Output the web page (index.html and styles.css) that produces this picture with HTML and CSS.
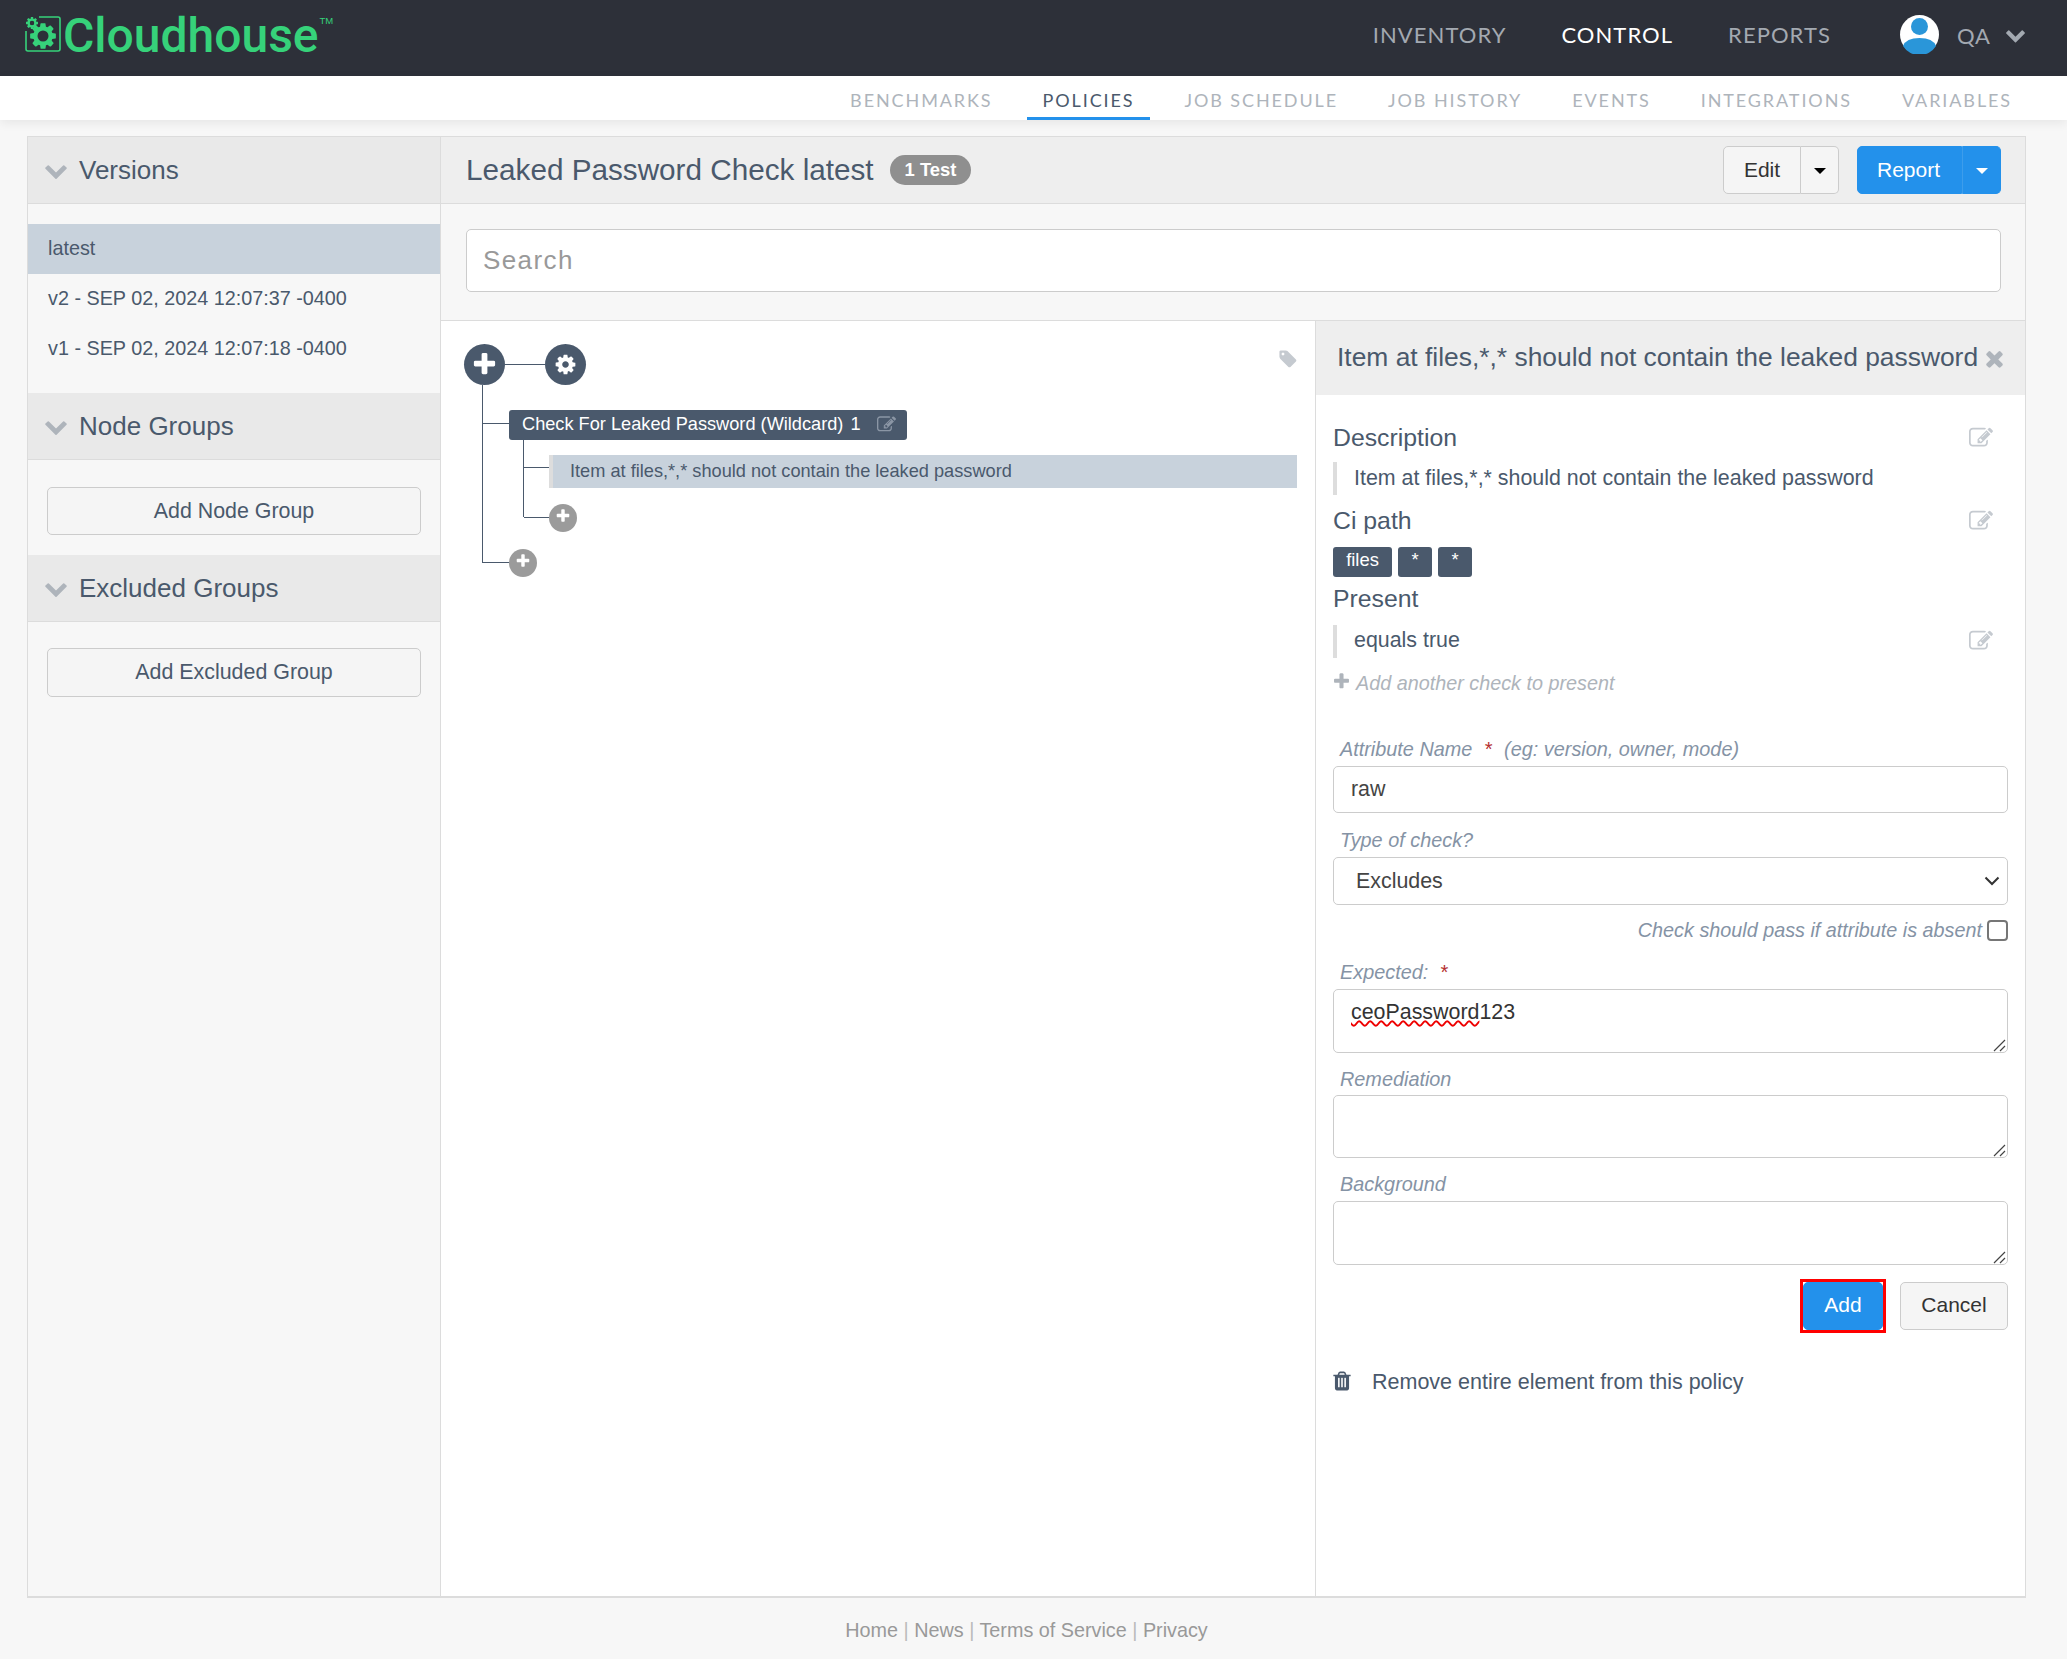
FILE: index.html
```html
<!DOCTYPE html>
<html lang="en">

<head>
 <meta charset="UTF-8">
 <meta name="viewport" content="width=device-width, initial-scale=1.0">
 <link rel="stylesheet" href="styles.css">
 <title>Leaked Password Check - Cloudhouse</title>
</head>

<body>
 <!-- icon set used all over the page -->
 <svg class="icon-defs" aria-hidden="true">
  <symbol id="i-chevron" viewBox="0 0 1792 1792"><path d="M1683 808l-742 741q-19 19-45 19t-45-19l-742-741q-19-19-19-45.5t19-45.5l166-165q19-19 45-19t45 19l531 531 531-531q19-19 45-19t45 19l166 165q19 19 19 45.5t-19 45.5z"/></symbol>
  <symbol id="i-plus" viewBox="0 0 1792 1792"><path d="M1600 736v192q0 40-28 68t-68 28h-416v416q0 40-28 68t-68 28h-192q-40 0-68-28t-28-68v-416h-416q-40 0-68-28t-28-68v-192q0-40 28-68t68-28h416v-416q0-40 28-68t68-28h192q40 0 68 28t28 68v416h416q40 0 68 28t28 68z"/></symbol>
  <symbol id="i-cog" viewBox="0 0 1792 1792"><path d="M1152 896q0-106-75-181t-181-75-181 75-75 181 75 181 181 75 181-75 75-181zm512-109v222q0 12-8 23t-20 13l-185 28q-19 54-39 91 35 50 107 138 10 12 10 25t-9 23q-27 37-99 108t-94 71q-12 0-26-9l-138-108q-44 23-91 38-16 136-29 186-7 28-36 28h-222q-14 0-24.5-8.5t-11.5-21.5l-28-184q-49-16-90-37l-141 107q-10 9-25 9-14 0-25-11-126-114-165-168-7-10-7-23 0-12 8-23 15-21 51-66.5t54-70.5q-27-50-41-99l-183-27q-13-2-21-12.5t-8-23.5v-222q0-12 8-23t19-13l186-28q14-46 39-92-40-57-107-138-10-12-10-24 0-10 9-23 26-36 98.5-107.5t94.5-71.5q13 0 26 10l138 107q44-23 91-38 16-136 29-186 7-28 36-28h222q14 0 24.5 8.5t11.5 21.5l28 184q49 16 90 37l142-107q9-9 24-9 13 0 25 10 129 119 165 170 7 8 7 22 0 12-8 23-15 21-51 66.5t-54 70.5q26 50 41 98l183 28q13 2 21 12.5t8 23.5z"/></symbol>
  <symbol id="i-times" viewBox="0 0 1792 1792"><path d="M1490 1322q0 40-28 68l-136 136q-28 28-68 28t-68-28l-294-294-294 294q-28 28-68 28t-68-28l-136-136q-28-28-28-68t28-68l294-294-294-294q-28-28-28-68t28-68l136-136q28-28 68-28t68 28l294 294 294-294q28-28 68-28t68 28l136 136q28 28 28 68t-28 68l-294 294 294 294q28 28 28 68z"/></symbol>
  <symbol id="i-tag" viewBox="0 0 1792 1792"><path d="M576 448q0-53-37.5-90.5t-90.5-37.5-90.5 37.5-37.5 90.5 37.5 90.5 90.5 37.5 90.5-37.5 37.5-90.5zm1067 576q0 53-37 90l-491 492q-39 37-91 37-53 0-90-37l-715-716q-38-37-64.5-101t-26.5-117v-416q0-52 38-90t90-38h416q53 0 117 26.5t102 64.5l715 714q37 39 37 91z"/></symbol>
  <symbol id="i-trash" viewBox="0 0 1792 1792"><path d="M704 1376v-704q0-14-9-23t-23-9h-64q-14 0-23 9t-9 23v704q0 14 9 23t23 9h64q14 0 23-9t9-23zm256 0v-704q0-14-9-23t-23-9h-64q-14 0-23 9t-9 23v704q0 14 9 23t23 9h64q14 0 23-9t9-23zm256 0v-704q0-14-9-23t-23-9h-64q-14 0-23 9t-9 23v704q0 14 9 23t23 9h64q14 0 23-9t9-23zm-544-992h448l-48-117q-7-9-17-11h-317q-10 2-17 11zm928 32v64q0 14-9 23t-23 9h-96v948q0 83-47 143.5t-113 60.5h-832q-66 0-113-58.5t-47-141.5v-952h-96q-14 0-23-9t-9-23v-64q0-14 9-23t23-9h309l70-167q15-37 54-63t79-26h320q40 0 79 26t54 63l70 167h309q14 0 23 9t9 23z"/></symbol>
  <symbol id="i-edit" viewBox="0 0 1792 1792"><path d="M888 1184l116-116-152-152-116 116v56h96v96h56zm440-720q-16-16-33 1l-350 350q-17 17-1 33t33-1l350-350q17-17 1-33zm80 594v190q0 119-84.5 203.5t-203.5 84.5h-832q-119 0-203.5-84.5t-84.5-203.5v-832q0-119 84.5-203.5t203.5-84.5h832q63 0 117 25 15 7 18 23 3 17-9 29l-49 49q-14 14-32 8-23-6-45-6h-832q-66 0-113 47t-47 113v832q0 66 47 113t113 47h832q66 0 113-47t47-113v-126q0-13 9-22l64-64q15-15 35-7t20 29zm-96-738l288 288-672 672h-288v-288zm444 132l-92 92-288-288 92-92q28-28 68-28t68 28l152 152q28 28 28 68t-28 68z"/></symbol>
 </svg>

 <header class="topbar">
  <a class="logo" href="#">
   <svg class="logo-mark" viewBox="0 0 36 36">
    <path class="logo-box" d="M14 1h19q2 0 2 2v30q0 2-2 2H3q-2 0-2-2V15"/>
    <use href="#i-cog" y="0" width="14" height="14"/>
    <circle class="logo-hole" cx="7" cy="7" r="2.200"/>
    <use href="#i-cog" x="3" y="5" width="30" height="30"/>
    <circle class="logo-hole" cx="18" cy="20" r="5.500"/>
   </svg>
   <span class="logo-text">Cloudhouse</span><span class="logo-tm">TM</span>
  </a>
  <nav class="main-nav">
   <a href="#">Inventory</a>
   <a href="#" class="active">Control</a>
   <a href="#">Reports</a>
  </nav>
  <div class="user-menu">
   <svg class="avatar" viewBox="0 0 39 39">
    <circle cx="19.5" cy="19.5" r="19.5" fill="#fff"/>
    <ellipse cx="19.5" cy="11.5" rx="8.5" ry="8.5" fill="#2a96d9"/>
    <path d="M3 31q3-8 16.500-8T36 31a19.500 19.500 0 0 1-33 0z" fill="#2a96d9"/>
   </svg>
   <span class="user-name">QA</span>
   <svg class="user-caret"><use href="#i-chevron"/></svg>
  </div>
 </header>

 <nav class="sub-nav">
  <a href="#">Benchmarks</a>
  <a href="#" class="active">Policies</a>
  <a href="#">Job Schedule</a>
  <a href="#">Job History</a>
  <a href="#">Events</a>
  <a href="#">Integrations</a>
  <a href="#">Variables</a>
 </nav>

 <main class="frame">
  <aside class="sidebar">
   <h2 class="side-head"><svg class="side-caret"><use href="#i-chevron"/></svg>Versions</h2>
   <ul class="version-list">
    <li class="selected">latest</li>
    <li>v2 - SEP 02, 2024 12:07:37 -0400</li>
    <li>v1 - SEP 02, 2024 12:07:18 -0400</li>
   </ul>
   <h2 class="side-head side-head-gap"><svg class="side-caret"><use href="#i-chevron"/></svg>Node Groups</h2>
   <div class="side-action"><button class="btn btn-wide">Add Node Group</button></div>
   <h2 class="side-head side-head-gap side-head-low"><svg class="side-caret"><use href="#i-chevron"/></svg>Excluded Groups</h2>
   <div class="side-action side-action-last"><button class="btn btn-wide">Add Excluded Group</button></div>
  </aside>

  <section class="policy">
   <div class="policy-head">
    <h1>Leaked Password Check latest</h1>
    <span class="badge">1 Test</span>
    <div class="head-buttons">
     <div class="split">
      <button class="btn split-main">Edit</button>
      <button class="btn split-caret"><i class="caret"></i></button>
     </div>
     <div class="split split-blue">
      <button class="btn split-main">Report</button>
      <button class="btn split-caret"><i class="caret"></i></button>
     </div>
    </div>
   </div>

   <div class="search-bar">
    <input type="text" class="search-input" placeholder="Search">
   </div>

   <div class="workspace">
    <div class="tree">
     <div class="tree-root">
      <span class="node-btn"><svg><use href="#i-plus"/></svg></span>
      <span class="root-link"></span>
      <span class="node-btn"><svg class="small"><use href="#i-cog"/></svg></span>
      <svg class="tree-tag"><use href="#i-tag"/></svg>
     </div>
     <div class="branch">
      <div class="group-title">
       <span>Check For Leaked Password (Wildcard)</span>
       <span>1</span>
       <svg><use href="#i-edit"/></svg>
      </div>
      <div class="branch-inner">
       <div class="tree-item">Item at files,*,* should not contain the leaked password</div>
       <span class="add-btn add-inner"><svg><use href="#i-plus"/></svg></span>
      </div>
      <span class="add-btn add-outer"><svg><use href="#i-plus"/></svg></span>
     </div>
    </div>

    <div class="detail">
     <div class="detail-head">
      <span>Item at files,*,* should not contain the leaked password</span>
      <svg><use href="#i-times"/></svg>
     </div>
     <div class="detail-body">
      <div class="prop-head">Description<svg class="edit-icon"><use href="#i-edit"/></svg></div>
      <div class="prop-value">Item at files,*,* should not contain the leaked password</div>
      <div class="prop-head prop-ci">Ci path<svg class="edit-icon"><use href="#i-edit"/></svg></div>
      <div class="tags">
       <span class="tag">files</span>
       <span class="tag tag-star">*</span>
       <span class="tag tag-star">*</span>
      </div>
      <div class="prop-head prop-present">Present</div>
      <div class="prop-value prop-row">equals true<svg class="edit-icon"><use href="#i-edit"/></svg></div>
      <div class="add-check"><svg><use href="#i-plus"/></svg>Add another check to present</div>

      <form class="check-form">
       <label class="field-label first">Attribute Name <b class="req">*</b> (eg: version, owner, mode)</label>
       <input type="text" class="control" value="raw">

       <label class="field-label">Type of check?</label>
       <select class="control control-select">
        <option>Excludes</option>
       </select>

       <div class="absent-row">
        <span>Check should pass if attribute is absent</span>
        <i class="checkbox"></i>
       </div>

       <label class="field-label expected">Expected: <b class="req">*</b></label>
       <div class="control area area-text"><span class="misspelt">ceoPassword</span>123</div>

       <label class="field-label field-tight">Remediation</label>
       <textarea class="control area"></textarea>

       <label class="field-label field-last">Background</label>
       <textarea class="control area area-last"></textarea>

       <div class="form-buttons">
        <span class="add-mark"><button type="button" class="btn btn-add">Add</button></span>
        <button type="button" class="btn btn-cancel">Cancel</button>
       </div>
      </form>

      <div class="remove-row"><svg><use href="#i-trash"/></svg>Remove entire element from this policy</div>
     </div>
    </div>
   </div>
  </section>
 </main>

 <footer class="page-foot">
  <a href="#">Home</a> | <a href="#">News</a> | <a href="#">Terms of Service</a> | <a href="#">Privacy</a>
 </footer>
</body>

</html>
```

FILE: styles.css
```css
/* Reset */
body,
h1,
h2,
ul {
 margin: 0;
 padding: 0;
}

a {
 text-decoration: none;
 color: inherit;
}

body {
 background-color: #F7F7F7;
 color: #4A596C;
 font-family: "Liberation Sans", Arial, sans-serif;
 font-size: 21.4px;
}

.icon-defs {
 display: none;
}

svg {
 fill: currentColor;
}

/* Top bar */
.topbar {
 display: flex;
 align-items: center;
 height: 76px;
 padding-bottom: 7px;
 box-sizing: border-box;
 background-color: #2D3039;
}

.logo {
 display: flex;
 align-items: flex-start;
 margin-left: 25px;
 color: #36D27A;
}

.logo-mark {
 width: 36px;
 height: 36px;
}

.logo-box {
 fill: none;
 stroke: #36D27A;
 stroke-width: 1.6;
}

.logo-hole {
 fill: #2D3039;
}

.logo-text {
 margin-left: 2px;
 margin-top: 2px;
 font-family: Roboto, sans-serif;
 font-size: 48px;
 font-weight: 500;
 line-height: 36px;
}

.logo-tm {
 margin-left: 1px;
 font-size: 9.5px;
 line-height: 10px;
}

.main-nav {
 display: flex;
 gap: 55px;
 margin-left: auto;
 font-family: Lato, sans-serif;
 font-size: 22px;
 letter-spacing: 1.05px;
 text-transform: uppercase;
 color: #A3A9B1;
}

.main-nav .active {
 color: #FFF;
}

.user-menu {
 display: flex;
 align-items: center;
 margin-left: 69px;
 margin-right: 41px;
 color: #A3A9B1;
}

.avatar {
 width: 39px;
 height: 39px;
}

.user-name {
 margin-left: 18px;
 font-family: Lato, sans-serif;
 font-size: 22px;
 letter-spacing: 1px;
 margin-top: 2px;
}

.user-caret {
 width: 21px;
 height: 21px;
 margin-left: 14px;
}

/* Second level tabs */
.sub-nav {
 display: flex;
 justify-content: flex-end;
 height: 44px;
 padding-right: 39px;
 background-color: #FFF;
 box-shadow: 0 3px 10px rgba(0, 0, 0, 0.07);
 font-family: Lato, sans-serif;
 font-size: 18px;
 letter-spacing: 1.9px;
 text-transform: uppercase;
 color: #AEB4BB;
}

.sub-nav a {
 padding: 13px 16px 0;
 margin-left: 18px;
 height: 44px;
 box-sizing: border-box;
}

.sub-nav .active {
 color: #4A596C;
 border-bottom: 3px solid #2391EB;
}

/* Main frame */
.frame {
 display: flex;
 height: 1462px;
 margin: 16px 41px 0 27px;
 border: 1px solid #DCDCDC;
 border-bottom-width: 2px;
 box-sizing: border-box;
}

.sidebar {
 width: 412px;
 flex: none;
 border-right: 1px solid #DCDCDC;
}

.side-head {
 display: flex;
 align-items: center;
 height: 67px;
 padding-left: 16px;
 box-sizing: border-box;
 background-color: #E9E9E9;
 border-bottom: 1px solid #DCDCDC;
 font-size: 26px;
 font-weight: normal;
}

.side-head-gap {
 margin-top: 19px;
}

.side-head-low {
 margin-top: 20px;
}

.side-caret {
 width: 24px;
 height: 24px;
 margin-right: 11px;
 color: #AEB4BB;
}

.version-list {
 list-style: none;
 padding-top: 20px;
 font-size: 19.8px;
}

.version-list li {
 height: 50px;
 line-height: 48px;
 padding-left: 20px;
}

.version-list .selected {
 background-color: #C8D2DC;
}

.side-action {
 padding: 27px 19px 0;
}

.side-action-last {
 padding-top: 26px;
}

.side-action-last .btn-wide {
 height: 49px;
}

/* Buttons */
.btn {
 font-family: "Liberation Sans", Arial, sans-serif;
 font-size: 21px;
 color: #333;
 background-color: #F5F5F5;
 border: 1px solid #CCC;
 border-radius: 5px;
 cursor: pointer;
}

.btn-wide {
 display: block;
 width: 100%;
 height: 48px;
 color: #4A596C;
 font-size: 21.4px;
}

.split {
 display: flex;
 height: 48px;
}

.split-main {
 width: 78px;
 border-radius: 5px 0 0 5px;
}

.split-caret {
 width: 38px;
 border-left: none;
 border-radius: 0 5px 5px 0;
 padding: 0;
}

.caret {
 display: inline-block;
 border-top: 6px solid #000;
 border-left: 6px solid transparent;
 border-right: 6px solid transparent;
 vertical-align: middle;
}

.split-blue .btn {
 background-color: #2391EB;
 border-color: #2391EB;
 color: #FFF;
}

.split-blue .split-main {
 width: 105px;
 padding-right: 8px;
}

.split-blue .split-caret {
 width: 39px;
 border-left: 1px solid #3D9DEB;
}

.split-blue .caret {
 border-top-color: #FFF;
}

/* Policy panel */
.policy {
 flex: 1;
 display: flex;
 flex-direction: column;
 min-width: 0;
}

.policy-head {
 display: flex;
 align-items: center;
 height: 67px;
 padding: 0 24px 0 25px;
 box-sizing: border-box;
 background-color: #EEE;
 border-bottom: 1px solid #DCDCDC;
}

.policy-head h1 {
 font-size: 29.7px;
 font-weight: normal;
}

.badge {
 margin-left: 16px;
 padding: 0 15px;
 height: 30px;
 line-height: 30px;
 border-radius: 15px;
 background-color: #8F8F8F;
 color: #FFF;
 font-size: 18.4px;
 font-weight: bold;
}

.head-buttons {
 display: flex;
 gap: 18px;
 margin-left: auto;
}

.search-bar {
 padding: 25px 24px 28px 25px;
 border-bottom: 1px solid #DCDCDC;
}

.search-input {
 display: block;
 width: 100%;
 height: 63px;
 padding: 0 16px;
 box-sizing: border-box;
 border: 1px solid #CCC;
 border-radius: 5px;
 background-color: #FFF;
 font-family: "Liberation Sans", Arial, sans-serif;
 font-size: 26px;
 letter-spacing: 1.4px;
}

.search-input::placeholder {
 color: #999;
}

.workspace {
 flex: 1;
 display: flex;
 min-height: 0;
}

/* Tree */
.tree {
 width: 874px;
 flex: none;
 padding: 23px 18px 0 23px;
 box-sizing: border-box;
 background-color: #FFF;
}

.tree-root {
 display: flex;
 align-items: center;
 height: 41px;
}

.node-btn {
 display: flex;
 align-items: center;
 justify-content: center;
 width: 41px;
 height: 41px;
 border-radius: 50%;
 background-color: #4A596C;
 color: #FFF;
}

.node-btn svg {
 width: 27px;
 height: 27px;
}

.node-btn svg.small {
 width: 23px;
 height: 23px;
}

.root-link {
 width: 40px;
 height: 1px;
 background-color: #4A596C;
}

.tree-tag {
 width: 20px;
 height: 20px;
 margin-left: auto;
 margin-right: -1px;
 margin-top: -11px;
 color: #C5CAD0;
}

.branch {
 position: relative;
 height: 178px;
 margin-left: 18px;
 border-left: 1px solid #4A596C;
}

.group-title {
 position: relative;
 top: 25px;
 display: flex;
 align-items: center;
 gap: 7px;
 width: 398px;
 height: 30px;
 margin-left: 26px;
 padding: 0 0 2px 13px;
 box-sizing: border-box;
 border-radius: 3px;
 background-color: #4A596C;
 color: #FFF;
 font-size: 18.2px;
}

.group-title svg {
 width: 19px;
 height: 19px;
 margin-left: 9px;
 color: #8B96A5;
}

.group-title::before,
.tree-item::before,
.add-btn::before {
 content: "";
 position: absolute;
 height: 1px;
 background-color: #4A596C;
}

.group-title::before {
 left: -26px;
 top: 13px;
 width: 26px;
}

.branch-inner {
 position: relative;
 top: 25px;
 height: 77px;
 margin-left: 40px;
 border-left: 1px solid #4A596C;
}

.tree-item {
 position: relative;
 top: 15px;
 height: 33px;
 line-height: 32px;
 margin-left: 25px;
 padding-left: 17px;
 border-left: 4px solid #DDD;
 background-color: #C8D2DC;
 font-size: 18.2px;
}

.tree-item::before {
 left: -29px;
 top: 12px;
 width: 25px;
}

.add-btn {
 position: relative;
 display: flex;
 justify-content: center;
 width: 28px;
 height: 28px;
 border-radius: 50%;
 background-color: #9B9B9B;
 color: #FFF;
}

.add-btn svg {
 width: 16px;
 height: 16px;
 margin-top: 4px;
}

.add-inner {
 top: 31px;
 margin-left: 25px;
}

.add-inner::before {
 left: -25px;
 top: 13px;
 width: 25px;
}

.add-outer {
 top: 57px;
 margin-left: 26px;
}

.add-outer::before {
 left: -26px;
 top: 13px;
 width: 26px;
}

/* Detail panel */
.detail {
 flex: 1;
 min-width: 0;
 border-left: 1px solid #DCDCDC;
 background-color: #FFF;
}

.detail-head {
 display: flex;
 align-items: center;
 height: 74px;
 padding: 0 0 2px 21px;
 box-sizing: border-box;
 background-color: #EEE;
 font-size: 26.4px;
 white-space: nowrap;
}

.detail-head svg {
 width: 25px;
 height: 25px;
 margin-left: 4px;
 margin-top: 2px;
 color: #AEB4BB;
}

.detail-body {
 padding: 27px 17px 0 17px;
}

.prop-head,
.prop-row {
 display: flex;
 justify-content: space-between;
 align-items: center;
}

.prop-head {
 height: 32px;
 font-size: 24.800px;
}

.edit-icon {
 width: 24px;
 height: 24px;
 margin-right: 15px;
 color: #C5CAD0;
}

.prop-value {
 height: 33px;
 line-height: 33px;
 margin-top: 8px;
 padding-left: 17px;
 border-left: 4px solid #DDD;
}

.prop-ci {
 margin-top: 10px;
}

.tags {
 display: flex;
 gap: 6px;
 margin-top: 10px;
}

.tag {
 width: 59px;
 height: 30px;
 line-height: 26px;
 border-radius: 3px;
 background-color: #4A596C;
 color: #FFF;
 font-size: 18.4px;
 text-align: center;
}

.tag-star {
 width: 34px;
}

.prop-present {
 margin-top: 6px;
}

.prop-row {
 margin-top: 10px;
 padding-bottom: 2px;
 box-sizing: border-box;
 line-height: 31px;
}

.add-check {
 display: flex;
 align-items: center;
 height: 24px;
 margin-top: 13px;
 color: #AEB4BB;
 font-size: 19.8px;
 font-style: italic;
}

.add-check svg {
 width: 19px;
 height: 19px;
 margin: -3px 5px 0 -1px;
}

/* Form */
.field-label {
 display: block;
 height: 24px;
 line-height: 24px;
 margin-top: 15px;
 margin-bottom: 5px;
 padding-left: 7px;
 color: #8593A5;
 font-size: 19.85px;
 font-style: italic;
}

.field-label.first {
 margin-top: 42px;
}

.field-label.expected {
 margin-top: 18px;
 margin-bottom: 5px;
}

.field-label.field-tight {
 margin-top: 14px;
 margin-bottom: 4px;
}

.field-label.field-last {
 margin-top: 14px;
}

.req {
 padding: 0 7px 0 6px;
 color: #B5302F;
 font-weight: normal;
}

.control {
 display: block;
 width: 100%;
 height: 47px;
 padding: 0 17px;
 box-sizing: border-box;
 border: 1px solid #CCC;
 border-radius: 5px;
 background-color: #FFF;
 color: #444;
 font-family: "Liberation Sans", Arial, sans-serif;
 font-size: 21.4px;
}

.control-select {
 height: 48px;
 padding-left: 22px;
 appearance: none;
 background-image: url("data:image/svg+xml,%3Csvg xmlns='http://www.w3.org/2000/svg' width='16' height='10'%3E%3Cpath d='M1.500 1.500 8 8l6.500-6.500' fill='none' stroke='%23333' stroke-width='2'/%3E%3C/svg%3E");
 background-repeat: no-repeat;
 background-position: right 7px center;
}

.area {
 height: 63px;
 padding: 7px 17px;
 resize: vertical;
 overflow: auto;
}

.area::-webkit-resizer {
 background-image: url("data:image/svg+xml,%3Csvg xmlns='http://www.w3.org/2000/svg' width='15' height='15'%3E%3Cpath d='M2 14 13 3M8 14l5-5' fill='none' stroke='%23444' stroke-width='1.200'/%3E%3C/svg%3E");
 background-repeat: no-repeat;
}

.area-text {
 height: 64px;
 padding-top: 9px;
 line-height: 26px;
 color: #333;
}

.area-last {
 height: 64px;
}

.misspelt {
 text-decoration: underline wavy #E00;
 text-decoration-thickness: 1.500px;
 text-underline-offset: 1px;
}

.absent-row {
 display: flex;
 justify-content: flex-end;
 align-items: center;
 gap: 5px;
 margin-top: 14px;
 color: #8593A5;
 font-size: 19.8px;
 font-style: italic;
}

.checkbox {
 width: 21px;
 height: 21px;
 box-sizing: border-box;
 border: 2px solid #767676;
 border-radius: 4px;
 background-color: #FFF;
}

.form-buttons {
 display: flex;
 justify-content: flex-end;
 align-items: center;
 gap: 17px;
 margin-top: 17px;
}

.add-mark {
 display: flex;
 margin: -3px;
 border: 3px solid #F00;
}

.btn-add {
 width: 80px;
 height: 48px;
 padding-bottom: 3px;
 background-color: #2391EB;
 border-color: #2391EB;
 color: #FFF;
}

.btn-cancel {
 width: 108px;
 height: 48px;
 padding-bottom: 3px;
}

.remove-row {
 display: flex;
 align-items: center;
 height: 24px;
 margin-top: 40px;
 font-size: 21.5px;
}

.remove-row svg {
 width: 22px;
 height: 22px;
 margin: -3px 19px 0 -2px;
}

/* Footer */
.page-foot {
 margin-top: 21px;
 padding-right: 14px;
 text-align: center;
 color: #BBB;
 font-size: 19.8px;
}

.page-foot a {
 color: #999;
}
```
